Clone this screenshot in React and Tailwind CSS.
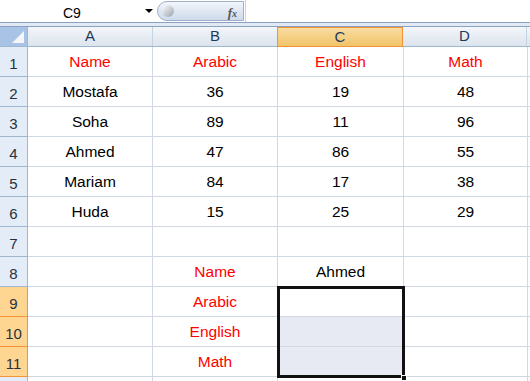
import React from "react";

const cols = [
  { key: "A", w: "w-[125px]" },
  { key: "B", w: "w-[125px]" },
  { key: "C", w: "w-[126px]" },
  { key: "D", w: "w-[124px]" },
];

const RED = "text-[#ff0000]";

// cell content per row: [A, B, C, D]
const rows = [
  [["Name", RED], ["Arabic", RED], ["English", RED], ["Math", RED]],
  [["Mostafa"], ["36"], ["19"], ["48"]],
  [["Soha"], ["89"], ["11"], ["96"]],
  [["Ahmed"], ["47"], ["86"], ["55"]],
  [["Mariam"], ["84"], ["17"], ["38"]],
  [["Huda"], ["15"], ["25"], ["29"]],
  [[""], [""], [""], [""]],
  [[""], ["Name", RED], ["Ahmed"], [""]],
  [[""], ["Arabic", RED], [""], [""]],
  [[""], ["English", RED], [""], [""]],
  [[""], ["Math", RED], [""], [""]],
  [[""], [""], [""], [""]],
];

const selectedRows = [9, 10, 11];

function FormulaBar() {
  return (
    <div className="h-[22px] flex bg-white">
      <div className="w-[157px] relative flex items-center">
        <span className="absolute left-[63px] top-[3px] text-[14px] text-black">C9</span>
        <span className="absolute left-[145px] top-[9px] w-0 h-0 border-l-[4px] border-r-[4px] border-t-[4px] border-l-transparent border-r-transparent border-t-black" />
      </div>
      <div className="w-[87px] h-[20px] mt-[1px] rounded-l-full border border-[#9eb0c8] bg-gradient-to-b from-[#f3f6fb] via-[#dfe7f2] to-[#cfdbeb] relative">
        <span className="absolute left-[4px] top-[3px] w-[12px] h-[12px] rounded-full bg-gradient-to-br from-[#ffffff] to-[#9aa3ae]" />
        <span className="absolute right-[6px] top-[1px] text-[13px] italic font-bold text-[#555] [font-family:'Liberation_Serif',serif]">
          f<span className="text-[10px]">x</span>
        </span>
      </div>
      <div className="flex-1 border-l border-[#c9d4e2] ml-[1px]" />
    </div>
  );
}

function ColumnHeader() {
  return (
    <div className="h-[20px] flex border-b border-[#9eb6ce]">
      <div className="w-[28px] h-[19px] bg-[#a9c3e6] border-r border-[#9eb6ce] relative">
        <span className="absolute right-[3px] bottom-[3px] w-0 h-0 border-l-[12px] border-t-[12px] border-l-transparent border-t-transparent border-b-0 border-r-0 [border-bottom:12px_solid_#f4f6f9] [border-left-color:transparent]" />
      </div>
      {cols.map((c) =>
        c.key === "C" ? (
          <div
            key={c.key}
            className={`${c.w} flex items-center justify-center text-[15px] text-[#1e395b] bg-gradient-to-b from-[#f9dca0] to-[#f1c468] border border-[#f29436] -ml-[1px] -mb-[1px] h-[20px]`}
          >
            {c.key}
          </div>
        ) : (
          <div
            key={c.key}
            className={`${c.w} h-[19px] flex items-center justify-center text-[15px] text-[#1e395b] bg-gradient-to-b from-[#f3f6fa] to-[#dce4ee] border-r border-[#c5d2e2]`}
          >
            {c.key}
          </div>
        )
      )}
      <div className="flex-1 bg-gradient-to-b from-[#f3f6fa] to-[#dce4ee]" />
    </div>
  );
}

export default function App() {
  return (
    <div className="w-[530px] h-[381px] overflow-hidden bg-white [font-family:'Liberation_Sans',Arial,sans-serif]">
      <FormulaBar />
      <div className="h-[1px] bg-[#8aa2c1]" />
      <div className="h-[3px] bg-[#e3e9f2]" />
      <div className="h-[1px] bg-[#8aa2c1]" />
      <ColumnHeader />
      <div className="relative">
        {rows.map((r, i) => {
          const n = i + 1;
          const sel = selectedRows.includes(n);
          return (
            <div key={n} className="h-[30px] flex">
              <div
                className={`w-[28px] flex items-end justify-center pb-[1px] text-[15px] text-[#27313d] ${
                  sel
                    ? "bg-[#ffd592] border-r border-b border-[#f29436]"
                    : "bg-[#e4ecf7] border-r border-b border-[#9eb6ce]"
                }`}
              >
                {n < 12 ? n : ""}
              </div>
              {r.map(([text, color], j) => {
                const shaded = j === 2 && (n === 10 || n === 11);
                return (
                  <div
                    key={j}
                    className={`${cols[j].w} border-r border-b border-[#d0d7e5] flex items-center justify-center text-[15.5px] pt-[1px] ${
                      color || "text-black"
                    } ${shaded ? "bg-[#e7e9f3]" : ""}`}
                  >
                    {text}
                  </div>
                );
              })}
              <div className="flex-1 border-b border-[#d0d7e5]" />
            </div>
          );
        })}
        {/* selection box over C9:C11 */}
        <div className="absolute left-[277px] top-[239px] w-[128px] h-[92px] border-[3px] border-[#111] pointer-events-none" />
        <div className="absolute left-[401px] top-[328px] w-[6px] h-[6px] bg-[#111] border border-white" />
      </div>
    </div>
  );
}
